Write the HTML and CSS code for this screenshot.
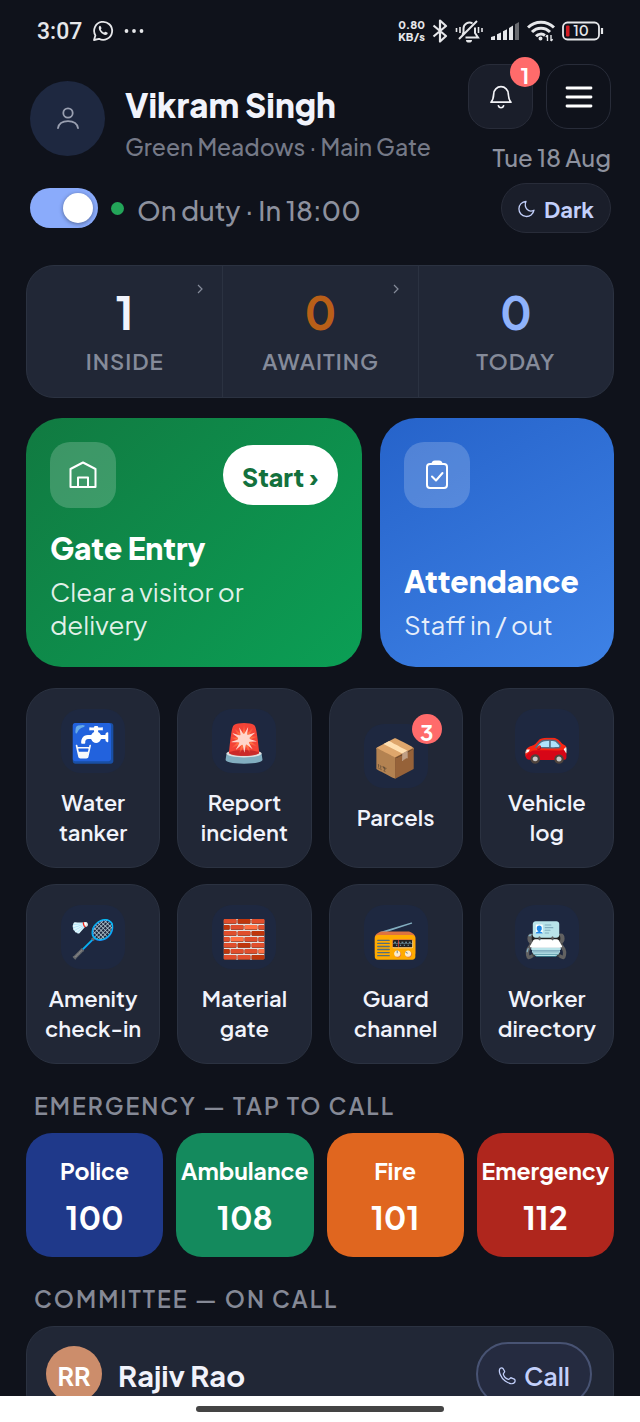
FILE: index.html
```html
<!DOCTYPE html>
<html lang="en">
<head>
<meta charset="utf-8">
<meta name="viewport" content="width=device-width, initial-scale=1">
<title>Guard dashboard</title>
<link rel="stylesheet" href="styles.css">
</head>
<body>
<div class="app">
  <div class="status">
    <div class="status-left">
      <span class="clock">3:07</span>
      <svg width="22" height="22" viewBox="0 0 22 22" fill="none" stroke="#e6e7ea" stroke-width="1.8"><path d="M2 20l1.400-4.600A9 9 0 1 1 7 18.800z" stroke-linejoin="round"/><path d="M7 6.500c.8-1 1.500-.8 1.900.2l.6 1.400c.2.500-.8 1.100-.6 1.600.6 1.200 1.600 2.200 2.900 2.800.5.200 1.100-1 1.700-.8l1.700.8c.7.300.6 1.300-.2 2-3 2.200-9.600-4-8-8z" fill="#e6e7ea" stroke="none"/></svg>
      <svg width="20" height="6" viewBox="0 0 20 6" fill="#e6e7ea"><circle cx="2.500" cy="3" r="1.900"/><circle cx="10" cy="3" r="1.900"/><circle cx="17.500" cy="3" r="1.900"/></svg>
    </div>
    <div class="status-right">
      <div class="speed"><span>0.80</span><span>KB/s</span></div>
      <svg width="16" height="24" viewBox="0 0 16 24" fill="none" stroke="#e6e7ea" stroke-width="2.200" stroke-linejoin="round"><path d="M1.500 6.500L14 17l-6 5.500v-21L14 7 1.500 17.500"/></svg>
      <svg width="28" height="24" viewBox="0 0 28 24" fill="none" stroke="#e6e7ea" stroke-width="2"><path d="M7.500 16l1-3V9.500a6 6 0 0 1 9-5.200M20 8.500V14l3 4.500H10.500M4 20L22 2"/><path d="M11 21h6a3 2.600 0 0 1-6 0z" fill="#e6e7ea" stroke="none"/><path d="M1.500 9v4M5 8v6M23.500 8v6M27 9v4" stroke-width="1.600"/></svg>
      <svg width="30" height="20" viewBox="0 0 30 20" fill="#e6e7ea"><path d="M1 16l4-1.300V19H1zM7 13.200l4-1.800V19H7zM13 10.200l4-2V19h-4zM19 7l4-2.500V19h-4z"/><path d="M25 3.200L29 1v18h-4z" fill="#696b70"/></svg>
      <svg width="28" height="22" viewBox="0 0 28 22" fill="none" stroke="#e6e7ea" stroke-width="3"><path d="M1 7.500a18.500 18.500 0 0 1 26 0M5 12a12.500 12.500 0 0 1 18 0M9 16.200a7 7 0 0 1 9-.8"/><circle cx="13.500" cy="18.500" r="1" stroke-width="2"/><path d="M20.500 21v-6M24 15v6M18.800 17l1.700-2M25.700 19.200L24 21" stroke-width="1.400"/></svg>
      <svg width="42" height="20" viewBox="0 0 42 20"><rect x="1" y="1.500" width="36" height="17" rx="4.500" fill="none" stroke="#e6e7ea" stroke-width="1.800"/><rect x="4" y="4.500" width="3.500" height="11" rx="1" fill="#d31d24"/><path d="M40 7v6" stroke="#e6e7ea" stroke-width="2.200"/><text class="battery" x="19" y="15" text-anchor="middle">10</text></svg>
    </div>
  </div>

  <main class="screen">
    <header class="header">
      <div class="header-left">
        <div class="identity">
          <div class="avatar"><svg width="24" height="24" viewBox="0 0 24 24" fill="none" stroke="#9aa0b1" stroke-width="1.800" stroke-linecap="round"><circle cx="12" cy="7" r="4.700"/><path d="M2 22.200c.8-4.600 4.800-7 10-7s9.200 2.400 10 7"/></svg></div>
          <div class="who">
            <h1 class="name">Vikram Singh</h1>
            <p class="place">Green Meadows · Main Gate</p>
          </div>
        </div>
        <label class="duty"><input class="switch" type="checkbox" role="switch" checked><span class="dot"></span><span class="duty-text">On duty · In 18:00</span></label>
      </div>
      <div class="header-right">
        <div class="actions">
          <button class="square filled" aria-label="Notifications"><svg width="24" height="26" viewBox="0 0 24 26" fill="none" stroke="#f3f4f8" stroke-width="1.700" stroke-linecap="round" stroke-linejoin="round"><path d="M2 18.200c2-2.200 2.500-4 2.700-8.200a7.300 7.300 0 0 1 14.600 0c.2 4.200.7 6 2.700 8.200zM9.400 21.800a2.700 2.700 0 0 0 5.200 0"/></svg><span class="badge">1</span></button>
          <button class="square" aria-label="Menu"><svg width="28" height="22" viewBox="0 0 28 22" stroke="#fff" stroke-width="2.800" stroke-linecap="round"><path d="M2 2h24M2 11h24M2 20h24"/></svg></button>
        </div>
        <p class="date">Tue 18 Aug</p>
        <button class="theme"><svg width="17" height="18" viewBox="0 0 17 18" fill="none" stroke="#c3d0fb" stroke-width="1.300" stroke-linejoin="round"><path d="M8 1.300A7.600 7.600 0 1 0 16 10.200c-5.500 3-10.500-2.700-8-8.900z"/></svg>Dark</button>
      </div>
    </header>

    <section class="stats">
      <button class="stat"><span class="count">1</span><span class="caption">INSIDE</span><svg class="chevron" width="6" height="10" viewBox="0 0 6 10"><path d="M1 1l4 4-4 4"/></svg></button>
      <button class="stat"><span class="count orange">0</span><span class="caption">AWAITING</span><svg class="chevron" width="6" height="10" viewBox="0 0 6 10"><path d="M1 1l4 4-4 4"/></svg></button>
      <div class="stat"><span class="count blue">0</span><span class="caption">TODAY</span></div>
    </section>

    <section class="heroes">
      <article class="hero green">
        <div class="hero-top">
          <span class="hero-icon"><svg width="30" height="30" viewBox="0 0 30 30" fill="none" stroke="#fff" stroke-width="2" stroke-linejoin="round"><path d="M2.500 27V9L15 2.500 27.500 9v18zM10 27v-9.500h10V27"/></svg></span>
          <button class="start">Start ›</button>
        </div>
        <div><h2 class="hero-title">Gate Entry</h2><p class="hero-text">Clear a visitor or delivery</p></div>
      </article>
      <article class="hero azure">
        <div class="hero-top"><span class="hero-icon"><svg width="30" height="30" viewBox="0 0 30 30" fill="none" stroke="#fff" stroke-width="2" stroke-linejoin="round" stroke-linecap="round"><rect x="5" y="4" width="20" height="24" rx="3"/><path d="M10.500 4c0-1.500 1-2.500 2.500-2.500h4c1.500 0 2.500 1 2.500 2.500z" fill="#fff"/><path d="M10 16.500l4 4 6.500-7.500"/></svg></span></div>
        <div><h2 class="hero-title">Attendance</h2><p class="hero-text">Staff in / out</p></div>
      </article>
    </section>

    <section class="tiles">
      <button class="tile"><span class="tile-icon">🚰</span><span class="tile-label">Water tanker</span></button>
      <button class="tile"><span class="tile-icon">🚨</span><span class="tile-label">Report incident</span></button>
      <button class="tile"><span class="tile-icon">📦<span class="badge">3</span></span><span class="tile-label">Parcels</span></button>
      <button class="tile"><span class="tile-icon">🚗</span><span class="tile-label">Vehicle log</span></button>
      <button class="tile"><span class="tile-icon">🏸</span><span class="tile-label">Amenity check-in</span></button>
      <button class="tile"><span class="tile-icon">🧱</span><span class="tile-label">Material gate</span></button>
      <button class="tile"><span class="tile-icon">📻</span><span class="tile-label">Guard channel</span></button>
      <button class="tile"><span class="tile-icon">📇</span><span class="tile-label">Worker directory</span></button>
    </section>

    <h2 class="heading">EMERGENCY — TAP TO CALL</h2>
    <section class="calls">
      <a class="call police" href="tel:100"><span>Police</span><span class="number">100</span></a>
      <a class="call ambulance" href="tel:108"><span>Ambulance</span><span class="number">108</span></a>
      <a class="call fire" href="tel:101"><span>Fire</span><span class="number">101</span></a>
      <a class="call emergency" href="tel:112"><span>Emergency</span><span class="number">112</span></a>
    </section>

    <h2 class="heading">COMMITTEE — ON CALL</h2>
    <section class="committee">
      <span class="initials">RR</span>
      <span class="member">Rajiv Rao</span>
      <button class="call-member"><svg width="18" height="18" viewBox="0 0 18 18" fill="none" stroke="#c3d0fb" stroke-width="1.300" stroke-linejoin="round"><path d="M2 1.500C3 .8 4.300.8 5 1.500l1.600 2.800c.4.900-1.500 2-1.300 2.900.6 2.500 2.500 4.500 5.200 5.200.9.200 1.800-2 2.800-1.600l3 1.400c1 .5 1 2.300.2 3.300-1.600 1.900-5.500 1.300-9.300-1.500C2.600 10.700.2 4.300 2 1.500z"/></svg>Call</button>
    </section>
  </main>
  <div class="navbar"><span class="handle"></span></div>
</div>
</body>
</html>
```
FILE: styles.css
```css
* { box-sizing: border-box; }
body { margin: 0; background: #0f121b; color: #f1f3fb; font-family: "Plus Jakarta Sans", Inter, "Noto Color Emoji", sans-serif; }
h1, h2, p { margin: 0; }
button { margin: 0; padding: 0; border: 0; background: none; color: inherit; font: inherit; }
a { color: inherit; text-decoration: none; }
svg { flex: none; display: block; }

.app { height: 100vh; display: flex; flex-direction: column; }
.status { display: flex; justify-content: space-between; align-items: center; height: 56px; padding: 6px 36px 0 37px; flex: none; color: #e6e7ea; }
.status-left, .status-right { display: flex; align-items: center; }
.status-left { gap: 10px; }
.status-right { gap: 7px; }
.clock { font-family: Roboto, sans-serif; font-size: 23px; font-weight: 500; }
.speed { display: flex; flex-direction: column; font-size: 11px; line-height: 12px; font-weight: 800; text-align: center; }
.battery { font-size: 14px; font-weight: 600; fill: #e6e7ea; }

.screen { flex: 1; min-height: 0; overflow: hidden; padding: 0 26px; }

.header { display: flex; justify-content: space-between; padding: 8px 3px 0 4px; }
.header-left { display: flex; flex-direction: column; gap: 32px; padding-top: 16px; }
.identity { display: flex; align-items: center; gap: 20px; }
.avatar { width: 75px; height: 75px; border-radius: 50%; background: #1e2840; display: grid; place-items: center; }
.who { padding-top: 8px; }
.name { font-size: 33px; line-height: 34px; font-weight: 800; }
.place { font-size: 23px; line-height: 22px; font-weight: 500; color: #757987; margin-top: 12px; padding-top: 2px; height: 22px; }
.duty { display: flex; align-items: center; gap: 13px; font-size: 27px; line-height: 36px; font-weight: 500; color: #8d919e; }
.duty-text { padding-top: 4px; }
.switch { appearance: none; margin: 0; width: 68px; height: 40px; border-radius: 20px; background: #8aabfb; padding: 5px; display: flex; justify-content: flex-end; }
.switch::before { content: ""; width: 30px; height: 30px; border-radius: 50%; background: #fff; box-shadow: 0 1px 4px #0006; }
.switch:not(:checked) { background: #3a4256; justify-content: flex-start; }
.dot { width: 13px; height: 13px; border-radius: 50%; background: #23a559; }

.header-right { display: flex; flex-direction: column; align-items: flex-end; }
.actions { display: flex; gap: 13px; }
.square { position: relative; width: 65px; height: 65px; border: 1px solid #282c39; border-radius: 22px; display: grid; place-items: center; }
.filled, .theme { background: #1a1e2a; }
.badge { position: absolute; top: -8px; right: -8px; width: 30px; height: 30px; border-radius: 50%; background: #ff6b6b; color: #fff; font-size: 22px; line-height: 36px; font-weight: 700; text-align: center; }
.date { font-size: 24px; line-height: 28px; font-weight: 500; color: #8d919e; padding: 14px 0 12px; }
.theme { display: flex; align-items: center; gap: 9px; height: 50px; padding: 2px 16px 0; border: 1px solid #282c39; border-radius: 25px; color: #c3d0fb; font-size: 22px; font-weight: 700; }

.stats { display: grid; grid-template-columns: repeat(3, 1fr); margin-top: 32px; background: #212736; border: 1px solid #2b3241; border-radius: 28px; }
.stat { position: relative; display: flex; flex-direction: column; align-items: center; padding: 18px 0 23px; }
.stat + .stat { border-left: 1px solid #2b3241; }
.count { font-size: 45px; line-height: 56px; font-weight: 700; }
.orange { color: #b95f18; }
.blue { color: #8fb2fb; }
.caption { font-size: 22px; line-height: 26px; padding-top: 8px; font-weight: 600; letter-spacing: 1px; color: #858b9a; }
.chevron { position: absolute; top: 18px; right: 19px; fill: none; stroke: #858b9a; stroke-width: 1.2; }

.heroes { display: grid; grid-template-columns: 56fr 39fr; gap: 18px; margin-top: 20px; }
.hero { min-height: 249px; padding: 24px 24px 26px; border-radius: 36px; display: flex; flex-direction: column; justify-content: space-between; color: #fff; }
.green { background: linear-gradient(135deg, #117a41, #0b9f55); }
.azure { background: linear-gradient(150deg, #2663ca, #3e82e6); }
.hero-top { display: flex; justify-content: space-between; align-items: center; }
.hero-icon { width: 66px; height: 66px; border-radius: 20px; background: #ffffff30; display: grid; place-items: center; }
.start { height: 60px; padding: 4px 19px 0; border-radius: 30px; background: #fff; color: #13713d; font-size: 25px; font-weight: 800; }
.hero-title { font-size: 30px; line-height: 38px; font-weight: 800; }
.hero-text { font-size: 26px; line-height: 33px; padding-top: 8px; font-weight: 400; color: #ffffffe0; }

.tiles { display: grid; grid-template-columns: repeat(4, 1fr); gap: 16px 17px; margin-top: 21px; }
.tile { min-height: 180px; padding: 0 10px; border: 1px solid #2b3241; border-radius: 30px; background: #212736; display: flex; flex-direction: column; align-items: center; justify-content: center; gap: 14px; }
.tile-icon { position: relative; width: 64px; height: 64px; border-radius: 20px; background: #1e2840; display: grid; place-items: center; font-size: 37px; line-height: 44px; }
.tile-icon .badge { top: -10px; right: -14px; }
.tile-label { font-size: 22px; line-height: 30px; font-weight: 600; }

.heading { margin: 27px 8px 12px; font-size: 23px; line-height: 30px; font-weight: 600; letter-spacing: 2px; color: #858996; }
.calls { display: grid; grid-template-columns: repeat(4, 1fr); gap: 13px; }
.call { min-width: 0; height: 124px; padding-top: 22px; border-radius: 26px; display: flex; flex-direction: column; align-items: center; color: #fff; font-size: 23px; line-height: 32px; font-weight: 700; }
.number { font-size: 32px; line-height: 42px; padding-top: 9px; }
.police { background: #1f398a; }
.ambulance { background: #148a5d; }
.fire { background: #e0661f; }
.emergency { background: #af261d; }

.committee { display: flex; align-items: center; padding: 15px 21px 15px 19px; border: 1px solid #2b3241; border-radius: 28px; background: #212736; }
.initials { width: 56px; height: 56px; border-radius: 50%; background: #cc8d6b; color: #fff; font-size: 25px; line-height: 60px; font-weight: 700; text-align: center; }
.member { flex: 1; padding: 2px 0 0 16px; font-size: 29px; font-weight: 700; }
.call-member { height: 64px; padding: 4px 20px 0; border: 2px solid #485373; border-radius: 32px; background: #252b40; display: flex; align-items: center; gap: 8px; color: #c3d0fb; font-size: 25px; font-weight: 600; }

.navbar { flex: none; height: 26px; background: #fff; display: grid; place-items: center; }
.handle { width: 248px; height: 6px; border-radius: 3px; background: #444; }
```
